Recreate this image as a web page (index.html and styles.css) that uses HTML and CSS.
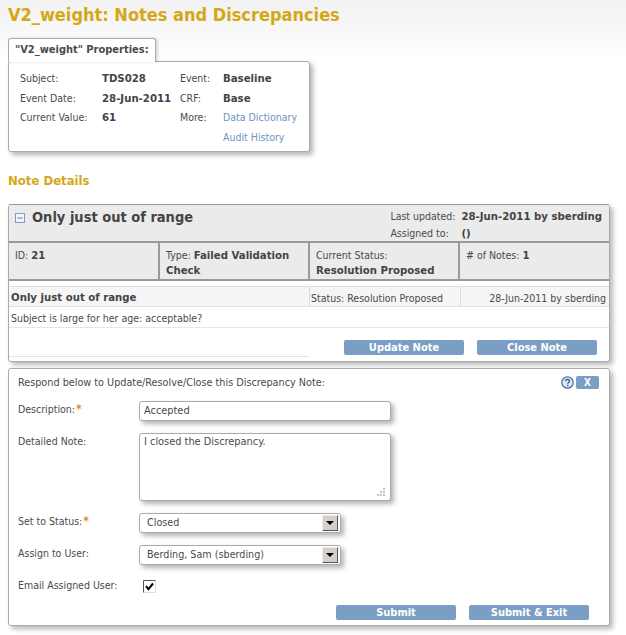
FILE: index.html
```html
<!DOCTYPE html>
<html lang="en">
<head>
<meta charset="utf-8">
<title>V2_weight: Notes and Discrepancies</title>
<link rel="stylesheet" href="styles.css">
</head>
<body>
<h1 class="title">V2_weight: Notes and Discrepancies</h1>

<div class="tab">"V2_weight" Properties:</div>
<section class="props">
  <span>Subject:</span><b>TDS028</b><span>Event:</span><b>Baseline</b>
  <span>Event Date:</span><b>28-Jun-2011</b><span>CRF:</span><b>Base</b>
  <span>Current Value:</span><b>61</b><span>More:</span><a href="#">Data Dictionary</a>
  <span></span><span></span><span></span><a href="#">Audit History</a>
</section>

<h2 class="subtitle">Note Details</h2>

<section class="panel note">
  <header class="note-head">
    <div class="note-title">
      <svg class="minus" width="10" height="10" viewBox="0 0 10 10"><rect x="0.5" y="0.5" width="9" height="9" fill="#f2f5f9" stroke="#7a9cc4"/><path d="M2.5 5h5" stroke="#5b7fae"/></svg>
      <span>Only just out of range</span>
    </div>
    <div class="note-meta">
      <span>Last updated:</span><b>28-Jun-2011 by sberding</b>
      <span>Assigned to:</span><b>()</b>
    </div>
  </header>
  <div class="cells">
    <div>ID: <b>21</b></div>
    <div><span>Type:</span> <b class="type-value">Failed Validation Check</b></div>
    <div>Current Status: <b class="block">Resolution Proposed</b></div>
    <div># of Notes: <b>1</b></div>
  </div>
  <div class="thread-head">
    <b class="thread-name">Only just out of range</b>
    <span class="thread-status">Status: Resolution Proposed</span>
    <span class="thread-date">28-Jun-2011 by sberding</span>
  </div>
  <div class="thread-body">Subject is large for her age: acceptable?</div>
  <div class="actions note-actions">
    <button class="btn" type="button">Update Note</button>
    <button class="btn" type="button">Close Note</button>
  </div>
  <div class="note-rule"></div>
</section>

<section class="panel respond">
  <div class="respond-top">
    <span>Respond below to Update/Resolve/Close this Discrepancy Note:</span>
    <span class="tools">
      <svg width="13" height="13" viewBox="0 0 13 13"><circle cx="6.5" cy="6.5" r="5.7" fill="#dfe8f3" stroke="#4d72a3" stroke-width="1.3"/><path d="M4.6 5.2c0-2.4 3.9-2.4 3.9-.2 0 1.4-1.8 1.4-1.8 2.8" fill="none" stroke="#2f5487" stroke-width="1.3"/><rect x="6" y="8.7" width="1.4" height="1.4" fill="#2f5487"/></svg>
      <button class="btn close" type="button">X</button>
    </span>
  </div>
  <div class="form">
    <label>Description:<i>*</i></label>
    <div class="control"><input class="field" type="text" value="Accepted"></div>
    <label>Detailed Note:</label>
    <div class="control area-wrap">
      <textarea class="field area">I closed the Discrepancy.</textarea>
      <svg class="grip" width="8" height="8" viewBox="0 0 8 8"><path d="M6 0h2v2H6zM3 3h2v2H3zM6 3h2v2H6zM0 6h2v2H0zM3 6h2v2H3zM6 6h2v2H6z" fill="#c4c4c4"/></svg>
    </div>
    <label>Set to Status:<i>*</i></label>
    <div class="select"><span>Closed</span><em class="arrow"></em></div>
    <label>Assign to User:</label>
    <div class="select"><span>Berding, Sam (sberding)</span><em class="arrow"></em></div>
    <label class="email">Email Assigned User:</label>
    <div class="check"><svg width="13" height="13" viewBox="0 0 13 13"><path d="M.5 12.5V.5h12" fill="none" stroke="#555"/><path d="M1 12.5h11.5V1" fill="none" stroke="#ddd"/><path d="M3 6.2l2.4 3L10 3.5" fill="none" stroke="#000" stroke-width="2"/></svg></div>
  </div>
  <div class="actions form-actions">
    <button class="btn" type="button">Submit</button>
    <button class="btn" type="button">Submit &amp; Exit</button>
  </div>
</section>
</body>
</html>
```
FILE: styles.css
```css
* { box-sizing: border-box; }
html, body { height: 100%; }
body {
  margin: 0;
  padding: 5px 16px 0 8px;
  overflow: hidden;
  background: linear-gradient(#f1f1f1 0, #fff 60px);
  font: 10.5px/14px "DejaVu Sans", sans-serif;
  font-stretch: condensed;
  color: #4a4a4a;
}
b { color: #444; font-size: 11.3px; }
.title {
  margin: 0 0 13px;
  font: bold 18px/20px "DejaVu Sans", sans-serif;
  font-stretch: condensed;
  color: #d4a718;
}
.tab {
  width: 148px;
  height: 24px;
  margin-bottom: -1px;
  position: relative;
  z-index: 1;
  padding: 4px 0 0 6px;
  background: #fff;
  border: 1px solid #aaa;
  border-bottom: 0;
  border-radius: 3px 3px 0 0;
  box-shadow: 2px 0 3px rgba(0,0,0,.15);
  font-weight: bold;
  font-size: 11px;
}
.props {
  width: 302px;
  height: 91px;
  padding: 9px 11px;
  display: grid;
  grid-template-columns: 82px 78px 43px 1fr;
  grid-auto-rows: 19.7px;
  align-items: baseline;
  background: #fff;
  border: 1px solid #aaa;
  border-radius: 3px;
  box-shadow: 3px 3px 5px rgba(0,0,0,.3);
}
a { color: #6f93bd; text-decoration: none; }
.subtitle {
  margin: 21px 0 15px;
  font: bold 13px/16px "DejaVu Sans", sans-serif;
  font-stretch: condensed;
  color: #d4a718;
}
.panel {
  width: 602px;
  background: #fff;
  border: 1px solid #aaa;
  border-radius: 3px;
  box-shadow: 3px 3px 5px rgba(0,0,0,.28);
}
.note { height: 158px; }
.note-head {
  height: 39px;
  padding: 2px 7px 0 6px;
  display: flex;
  justify-content: space-between;
  background: #ebebeb;
  border: 2px solid #999;
  border-width: 1px 0 2px;
  margin-top: -1px;
}
.note-title {
  display: flex;
  align-items: flex-start;
  gap: 7px;
  font: bold 14.5px/20px "DejaVu Sans", sans-serif;
  font-stretch: condensed;
  color: #444;
}
.minus { margin-top: 6px; flex: none; }
.note-meta {
  display: grid;
  grid-template-columns: 71px auto;
  align-content: start;
  align-items: baseline;
  padding-top: 1px;
  line-height: 16px;
}
.cells {
  height: 38px;
  display: grid;
  grid-template-columns: 151px 150px 150px 1fr;
  background: #ebebeb;
  border-bottom: 2px solid #999;
}
.cells > div { padding: 5px 6px 0; border-right: 2px solid #999; line-height: 15px; }
.cells > div:last-child { border-right: 0; }
.block { display: block; }
.thread-head {
  height: 21px;
  margin-top: 5px;
  display: grid;
  grid-template-columns: 298px 151px 1fr;
  align-items: stretch;
  background: #f5f5f5;
  border: 1px solid #e2e2e2;
  border-width: 1px 0;
  padding-left: 2px;
}
.thread-name, .thread-status, .thread-date { display: flex; align-items: center; padding-top: 3px; }
.thread-status, .thread-date { border-left: 1px solid #ddd; padding-left: 1px; }
.thread-date { justify-content: flex-end; padding-right: 3px; }
.thread-body {
  height: 21px;
  padding: 4px 0 0 2px;
  border-bottom: 1px solid #e6e6e6;
}
.actions { display: flex; gap: 13px; justify-content: flex-end; }
.note-actions { margin-top: 12px; padding-right: 12px; }
.note-rule { width: 300px; height: 1px; margin-top: 1px; background: #e3e3e3; }
.btn {
  width: 120px;
  height: 15px;
  padding: 0;
  border: 0;
  border-radius: 2px;
  background: #7a9ec4;
  color: #fff;
  font: bold 11px/15px "DejaVu Sans", sans-serif;
  font-stretch: condensed;
}
.respond { height: 258px; margin-top: 6px; position: relative; padding: 7px 9px 0 9px; }
.respond-top { display: flex; justify-content: space-between; align-items: flex-start; height: 25px; font-size: 10.75px; }
.tools { display: flex; align-items: center; gap: 2px; margin-right: 1px; }
.btn.close { width: 23px; height: 13px; line-height: 13px; font-size: 10px; }
.form {
  display: grid;
  grid-template-columns: 121px 1fr;
  align-items: start;
}
.form label { padding-top: 1px; line-height: 14px; }
.form i { margin-left: 1px; color: #e08a2e; font-style: normal; font-weight: bold; font-size: 12px; }
.field {
  display: block;
  width: 252px;
  height: 20px;
  padding: 1px 4px 3px;
  border: 1px solid #aaa;
  border-radius: 3px;
  background: #fff;
  font: inherit;
  font-size: 10.9px;
  font-stretch: condensed;
  color: #4a4a4a;
  outline: 0;
  box-shadow: 3px 3px 5px rgba(0,0,0,.3);
}
.area { height: 68px; resize: none; overflow: hidden; }
.control { margin-bottom: 12px; }
.area-wrap { position: relative; }
.grip { position: absolute; left: 238px; top: 55px; }
.select {
  width: 202px;
  height: 20px;
  margin-bottom: 12px;
  padding: 0 2px 1px 7px;
  display: flex;
  align-items: center;
  justify-content: space-between;
  background: #fff;
  border: 1px solid #aaa;
  border-radius: 3px;
  font-size: 10.7px;
  box-shadow: 3px 3px 5px rgba(0,0,0,.3);
}
.arrow {
  width: 16px;
  height: 16px;
  display: flex;
  align-items: center;
  justify-content: center;
  background: #d4d0c8;
  border: 1px solid;
  border-color: #eee #555 #555 #eee;
}
.arrow::after {
  content: "";
  border: 4px solid transparent;
  border-top: 4px solid #000;
  border-bottom: 0;
}
.check { padding: 3px 0 0 4px; height: 22px; }
.form-actions { position: absolute; right: 20px; bottom: 5px; }
```
